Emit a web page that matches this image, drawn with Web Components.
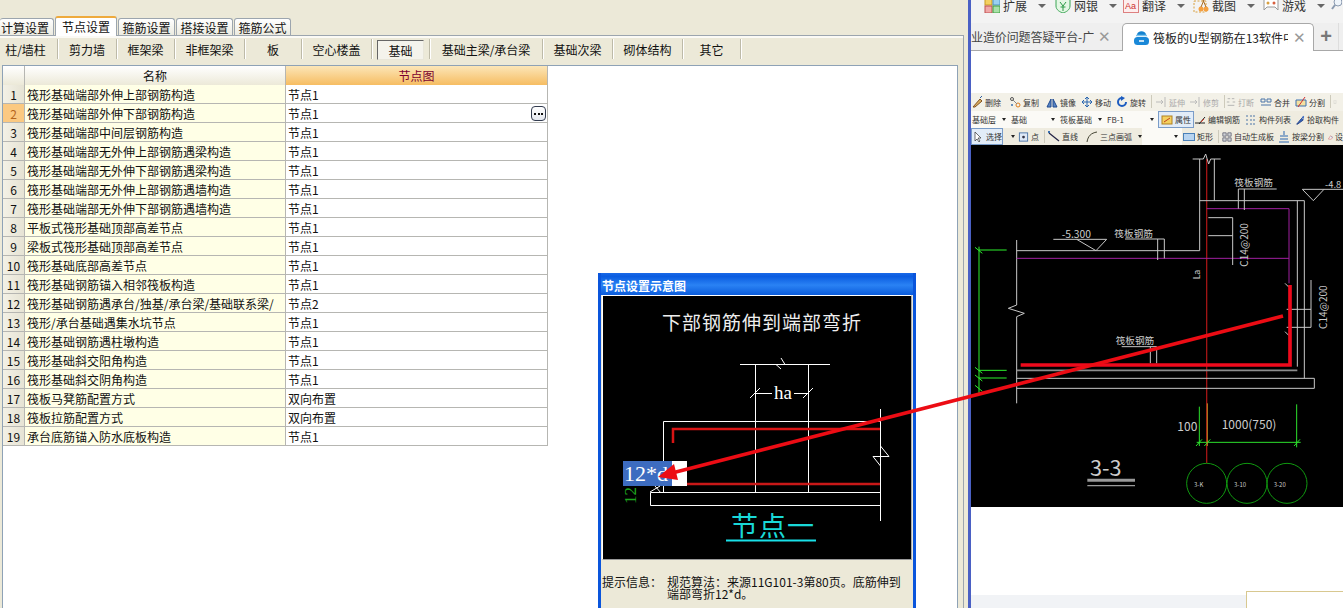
<!DOCTYPE html>
<html lang="zh">
<head>
<meta charset="utf-8">
<title>节点设置</title>
<style>
    html, body { margin: 0; height: 100%; overflow: hidden; }
    body {
        position: relative;
        display: flex;
        width: 1343px;
        height: 608px;
        font: 12px "Noto Sans CJK SC", "Liberation Sans", sans-serif;
        color: #111;
        background: #ece9d8;
    }
</style>
</head>
<body>
<setting-app></setting-app>
<browser-pane></browser-pane>
<node-dialog>
    <span slot="title">节点设置示意图</span>
    <svg slot="drawing" viewBox="0 0 306 261" width="306" height="261" fill="none" stroke="#fff" stroke-width="1">
        <text x="59" y="34" fill="#eee" stroke="none" font-size="19" letter-spacing="1">下部钢筋伸到端部弯折</text>
        <path d="M137 68.500H227M152.500 68.500V196M205.500 68.500V196"/>
        <path d="M178 62L182 68.500H173L178 73"/>
        <path d="M152.500 97.500H169M191 97.500H205M147 102l10-10M200 102l10-10"/>
        <text x="171" y="103" fill="#fff" stroke="none" font-size="19" font-family="Liberation Serif, serif">ha</text>
        <path d="M60.500 196V125.500H277M47.500 196.500H277M47.500 196.500V209.500H277M277.500 113V225"/>
        <path d="M277.500 150L286 160.500H270L277.500 170"/>
        <path d="M70 147V133H277" stroke="#d81414" stroke-width="2.500"/>
        <path d="M84 188H277" stroke="#c81818" stroke-width="2.500"/>
        <rect x="69" y="165" width="15" height="25" fill="#fff" stroke="none"/>
        <rect x="20" y="165" width="49" height="25" fill="#3d6cc0" stroke="none"/>
        <text x="21" y="185" fill="#fff" stroke="none" font-size="22" font-family="Liberation Serif, serif">12*d</text>
        <text transform="translate(33,208) rotate(-90)" fill="#1fa51f" stroke="none" font-size="17" font-family="Liberation Serif, serif">12</text>
        <path d="M47 196l10-6M52 190l6 7"/>
        <text x="128" y="240" fill="#19d8d8" stroke="none" font-size="27" letter-spacing="1">节点一</text>
        <path d="M123 244.500H213" stroke="#19e0e8" stroke-width="2"/>
    </svg>
    <span slot="label">提示信息：</span>
    <span slot="info">规范算法：来源11G101-3第80页。底筋伸到<br>端部弯折12*d。</span>
</node-dialog>
<red-arrow></red-arrow>

<script>
class SettingApp extends HTMLElement {
    constructor() {
        super();
        const shadowRoot = this.attachShadow({ mode: 'open' });
        const tabs = [['计算设置', 54, 0], ['节点设置', 62, 1], ['箍筋设置', 57, 0], ['搭接设置', 57, 0], ['箍筋公式', 57, 0]];
        const tools = [['柱/墙柱', 58], ['剪力墙', 59], ['框架梁', 58], ['非框架梁', 70], ['板', 57], ['空心楼盖', 70], ['基础', 58, 1], ['基础主梁/承台梁', 113], ['基础次梁', 70], ['砌体结构', 70], ['其它', 58]];
        shadowRoot.innerHTML = `
        <style>
            :host { display: block; width: 968px; height: 608px; flex: none; background: #ece9d8; }
            .tabs { display: flex; align-items: flex-end; height: 36px; gap: 1px; position: relative; z-index: 1; }
            .tab {
                box-sizing: border-box;
                height: 17px;
                margin-bottom: 1px;
                text-align: center;
                line-height: 18px;
                border: 1px solid #9ca5ae;
                border-bottom: 0;
                border-radius: 3px 3px 0 0;
                background: linear-gradient(#fff, #ecebe0);
            }
            .tab:first-child { border-left: 0; padding-right: 3px; }
            .tab.on {
                height: 20px;
                margin-bottom: 0;
                line-height: 17px;
                background: #fff;
                border-color: #9ca5ae;
                border-top: 2px solid #eeaa3c;
            }
            .panel {
                box-sizing: border-box;
                width: 964px;
                height: 573px;
                margin-top: -1px;
                border-top: 1px solid #9ca5ae;
                border-right: 1px solid #9ca5ae;
                box-shadow: inset 0 2px 0 #fbfaf5;
            }
            .tools { display: flex; height: 26px; padding-top: 3px; }
            .tool {
                box-sizing: border-box;
                display: flex;
                align-items: center;
                justify-content: center;
                height: 20px;
                border-right: 1px solid #bdbaa8;
                box-shadow: 1px 0 0 #fff;
            }
            .tool:first-child { padding-right: 6px; }
            .tool.on span {
                box-sizing: border-box;
                width: 47px;
                height: 20px;
                margin-top: 1px;
                line-height: 20px;
                text-align: center;
                background: #f4f3ec;
                border: 1px solid #e8e6da;
                border-top-color: #666;
                border-left-color: #666;
            }
            .frame {
                box-sizing: border-box;
                width: 956px;
                height: 544px;
                margin-left: 2px;
                background: #fff;
                border: 1px solid #8ea2b6;
                border-bottom: 0;
            }
        </style>
        <div class="tabs">${tabs.map(t => `<div class="tab ${t[2] ? 'on' : ''}" style="width:${t[1]}px">${t[0]}</div>`).join('')}</div>
        <div class="panel">
            <div class="tools">${tools.map(t => `<div class="tool ${t[2] ? 'on' : ''}" style="width:${t[1]}px"><span>${t[0]}</span></div>`).join('')}</div>
            <div class="frame"><node-table></node-table></div>
        </div>
        `;
    }
}

class NodeTable extends HTMLElement {
    constructor() {
        super();
        const shadowRoot = this.attachShadow({ mode: 'open' });
        const rows = [
            ['筏形基础端部外伸上部钢筋构造', '节点1'],
            ['筏形基础端部外伸下部钢筋构造', '节点1'],
            ['筏形基础端部中间层钢筋构造', '节点1'],
            ['筏形基础端部无外伸上部钢筋遇梁构造', '节点1'],
            ['筏形基础端部无外伸下部钢筋遇梁构造', '节点1'],
            ['筏形基础端部无外伸上部钢筋遇墙构造', '节点1'],
            ['筏形基础端部无外伸下部钢筋遇墙构造', '节点1'],
            ['平板式筏形基础顶部高差节点', '节点1'],
            ['梁板式筏形基础顶部高差节点', '节点1'],
            ['筏形基础底部高差节点', '节点1'],
            ['筏形基础钢筋锚入相邻筏板构造', '节点1'],
            ['筏形基础钢筋遇承台/独基/承台梁/基础联系梁/', '节点2'],
            ['筏形/承台基础遇集水坑节点', '节点1'],
            ['筏形基础钢筋遇柱墩构造', '节点1'],
            ['筏形基础斜交阳角构造', '节点1'],
            ['筏形基础斜交阴角构造', '节点1'],
            ['筏板马凳筋配置方式', '双向布置'],
            ['筏板拉筋配置方式', '双向布置'],
            ['承台底筋锚入防水底板构造', '节点1'],
        ];
        shadowRoot.innerHTML = `
        <style>
            :host { display: grid; grid-template-columns: 22px 261px 262px; grid-auto-rows: 19px; width: 545px; }
            div {
                box-sizing: border-box;
                padding: 0 2px;
                line-height: 19px;
                white-space: nowrap;
                overflow: hidden;
                border-right: 1px solid #b6b6b2;
                border-bottom: 1px solid #b6b6b2;
            }
            .head { height: 20px; margin-bottom: -1px; text-align: center; background: linear-gradient(#fff, #ece9d8); }
            .head.sel { color: #7a0030; background: linear-gradient(#fce6b8, #f6bd62); }
            .num { text-align: center; padding: 0; background: linear-gradient(90deg, #f3f1e6, #e6e3d4); }
            .num.sel { color: #b5651d; background: #fbc981; }
            .name { background: #ffffe6; }
            .node { display: flex; justify-content: space-between; background: #fff; padding-right: 1px; }
            .more {
                box-sizing: border-box;
                display: flex;
                align-items: center;
                justify-content: center;
                gap: 1.500px;
                width: 15px;
                height: 15px;
                margin-top: 2px;
                background: linear-gradient(#fff, #e4e8f0);
                border: 1px solid #333c50;
                border-radius: 4px;
            }
            .more i { width: 2px; height: 2px; background: #111; }
        </style>
        <div class="head"></div><div class="head">名称</div><div class="head sel">节点图</div>
        ${rows.map((r, i) => `
            <div class="num ${i == 1 ? 'sel' : ''}">${i + 1}</div>
            <div class="name">${r[0]}</div>
            <div class="node"><span>${r[1]}</span>${i == 1 ? '<span class="more"><i></i><i></i><i></i></span>' : ''}</div>
        `).join('')}
        `;
    }
}

class NodeDialog extends HTMLElement {
    constructor() {
        super();
        const shadowRoot = this.attachShadow({ mode: 'open' });
        shadowRoot.innerHTML = `
        <style>
            :host {
                position: absolute;
                left: 598px;
                top: 273px;
                box-sizing: border-box;
                display: block;
                width: 318px;
                height: 335px;
                overflow: hidden;
                background: #ece9d8;
                border: solid #0a55dc;
                border-width: 0 3px;
            }
            .title {
                height: 22px;
                margin: 0 -3px;
                padding-left: 4px;
                color: #fff;
                font-weight: 700;
                line-height: 25px;
                border-radius: 3px 3px 0 0;
                background: linear-gradient(#1a6ae8, #0a5ce0 15%, #2a82f4 55%, #0b5cdc);
            }
            .view {
                box-sizing: border-box;
                width: 310px;
                height: 265px;
                margin: 0 0 0 1px;
                background: #000;
                border: 1px solid;
                border-color: #fff #aaa #999 #fff;
            }
            .view ::slotted(svg) { display: block; }
            .info { display: flex; gap: 5px; margin-top: 16px; padding-left: 1px; line-height: 12px; }
            .info .l { flex: 0 0 60px; }
        </style>
        <div class="title"><slot name="title"></slot></div>
        <div class="view"><slot name="drawing"></slot></div>
        <div class="info"><div class="l"><slot name="label"></slot></div><div><slot name="info"></slot></div></div>
        `;
    }
}

class RedArrow extends HTMLElement {
    constructor() {
        super();
        const shadowRoot = this.attachShadow({ mode: 'open' });
        shadowRoot.innerHTML = `
        <style>
            :host { position: absolute; left: 0; top: 0; width: 1343px; height: 608px; pointer-events: none; }
            svg { display: block; }
        </style>
        <svg width="1343" height="608" viewBox="0 0 1343 608">
            <path d="M1283 316L672 473" stroke="#ec0c14" stroke-width="3.500"/>
            <path d="M658 477L674 464L678 480Z" fill="#ec0c14"/>
        </svg>
        `;
    }
}

class BrowserPane extends HTMLElement {
    constructor() {
        super();
        const shadowRoot = this.attachShadow({ mode: 'open' });
        const addons = [
            ['扩展', 984, `<rect x="1" y="0" width="7" height="7" fill="#f4d060" stroke="#c79a20"/><rect x="9" y="0" width="7" height="7" fill="#9ad0f0" stroke="#4a90c0"/><rect x="1" y="8" width="7" height="7" fill="#f0a8a8" stroke="#c05050"/><rect x="9" y="8" width="7" height="7" fill="#a8e0a8" stroke="#40a040"/>`, 1055],
            ['网银', 1055, `<path d="M1 1H15V8C15 12 11 14 8 15C5 14 1 12 1 8Z" fill="#e4f7e4" stroke="#3aa655"/><path d="M5 4L8 8L11 4M8 8V13M5.500 9H10.500" stroke="#2a9a45" fill="none"/>`, 1123],
            ['翻译', 1123, `<rect x="0.500" y="0.500" width="15" height="14" fill="#fdeeee" stroke="#dd8080"/><text x="2" y="11" font-size="9" fill="#cc3030" font-family="Liberation Sans, sans-serif">Aa</text>`, 1193],
            ['截图', 1193, `<path d="M1 3H13V14H1Z" fill="none" stroke="#d8a040" stroke-dasharray="2 1.500"/><circle cx="8" cy="11" r="2.500" fill="#f4a040"/><circle cx="13" cy="11" r="2.500" fill="#f4a040"/><path d="M8 9L11 2M13 9L10 2" stroke="#a86a20"/>`, 1263],
            ['游戏', 1263, `<path d="M1 1H15V12L12 9H4L1 12Z" fill="#fff" stroke="#999"/><circle cx="5" cy="5" r="1.500" fill="#d8a040"/><circle cx="11" cy="5" r="1.500" fill="#d86040"/>`, 1331],
        ];
        shadowRoot.innerHTML = `
        <style>
            :host { display: flex; flex-direction: column; width: 375px; height: 608px; flex: none; box-sizing: border-box; border-left: 3px solid #4a60c4; background: #fff; overflow: hidden; }
            .addons { display: flex; height: 23px; flex: none; overflow: hidden; background: #f3f3f3; padding-left: 13px; }
            .addon { display: flex; gap: 3px; align-items: flex-start; margin-top: -3px; font-size: 12px; line-height: 17px; color: #333; }
            .addon svg { flex: none; margin-top: 1px; }
            .addon b { margin: 7px 0 0 8px; border: 4px solid transparent; border-top: 4px solid #666; border-bottom: 0; }
            .strip { display: flex; height: 28px; flex: none; box-sizing: border-box; background: #efefef; border-bottom: 1px solid #a8a8a8; }
            .tab { display: flex; align-items: center; overflow: hidden; white-space: nowrap; }
            .tab .t { overflow: hidden; flex: none; }
            .x { color: #999; font: 15px "Liberation Sans", sans-serif; flex: none; }
            .idle { width: 151px; color: #444; font-size: 12px; flex: none; }
            .idle .t { width: 123px; letter-spacing: -.1px; }
            .idle .x { margin-left: 4px; }
            .active { box-sizing: border-box; width: 192px; height: 28px; flex: none; padding-left: 10px; gap: 3px; background: #fff; border: 1px solid #a8a8a8; border-bottom: 0; border-radius: 5px 5px 0 0; color: #222; font-size: 12px; }
            .active .t { width: 135px; }
            .active .x { margin-left: 2px; }
            .plus { flex: none; width: 24px; text-align: center; color: #777; font: 700 20px/26px "Liberation Sans", sans-serif; border-right: 1px solid #ddd; }
            .gap { height: 42px; flex: none; }
            .fill { flex: 1; }
            .foot { display: flex; height: 17px; flex: none; }
            .foot .gray { width: 275px; height: 13px; margin-top: 4px; background: #f1f3f6; }
            .foot .box { flex: 1; box-sizing: border-box; border: solid #d8c890; border-width: 1px 0 0 1px; }
        </style>
        <div class="addons">
            ${addons.map(a => {
                const w = a[3] - a[1];
                return `<div class="addon" style="flex:0 0 ${w}px"><svg width="16" height="15" viewBox="0 0 16 15">${a[2]}</svg><span>${a[0]}</span><b></b></div>`;
            }).join('')}
            <svg width="11" height="13" viewBox="0 0 11 13" style="flex:none;margin-top:-3px"><circle cx="7" cy="5" r="4" fill="#eef4fa" stroke="#8a9ab0"/><path d="M4 8L1 12" stroke="#8a9ab0" stroke-width="2"/></svg>
        </div>
        <div class="strip">
            <div class="tab idle"><span class="t">业造价问题答疑平台-广</span><span class="x">✕</span></div>
            <div class="tab active">
                <svg width="17" height="17" viewBox="0 0 17 17" style="flex:none"><path d="M4 6C4 1 13 1 13 6Z" fill="#1583d0"/><path d="M3 6.500H14" stroke="#7cc4ee" stroke-width="1.500"/><rect x="1" y="8" width="15" height="8" rx="3.500" fill="#1a88d8"/><path d="M6 12H11" stroke="#fff" stroke-width="1.500"/></svg>
                <span class="t">筏板的U型钢筋在13软件中</span><span class="x">✕</span>
            </div>
            <div class="plus">+</div>
        </div>
        <div class="gap"></div>
        <cad-toolbar></cad-toolbar>
        <cad-drawing></cad-drawing>
        <div class="fill"></div>
        <div class="foot"><div class="gray"></div><div class="box"></div></div>
        `;
    }
}

const cadIcons = {
    del: '<path d="M2 11L9 3L11 5L4 11Z" fill="#dcb060" stroke="#805020"/><path d="M9 2L11 0" stroke="#3060a0"/>',
    copy: '<circle cx="3" cy="3" r="1.500" fill="none" stroke="#555"/><circle cx="9" cy="9" r="2" fill="none" stroke="#e08020"/><circle cx="3" cy="9" r="1" fill="#3a70b0"/><path d="M4 4L8 8" stroke="#888"/>',
    mirror: '<path d="M1 11L5 3V11ZM11 11L7 3V11Z" fill="#5a86c4" stroke="#204a90"/>',
    move: '<path d="M6 1V11M1 6H11M6 1L4 3M6 1L8 3M6 11L4 9M6 11L8 9M1 6L3 4M1 6L3 8M11 6L9 4M11 6L9 8" stroke="#2a66b0" fill="none"/>',
    rotate: '<path d="M10 6A4 4 0 1 1 6 2" fill="none" stroke="#1c5cc0" stroke-width="2"/><path d="M5 0L9 2L5 5Z" fill="#1c5cc0"/>',
    extend: '<path d="M1 6H8M10 1V11" stroke="#bbb"/><path d="M6 4L8 6L6 8" stroke="#bbb" fill="none"/>',
    brk: '<path d="M1 6H4M8 6H11M2 2H5M7 2H10M2 10H10" stroke="#aaa"/>',
    merge: '<path d="M1 3H5V6H1ZM7 3H11V6H7ZM1 9H11" stroke="#4a74a8" fill="none"/>',
    split: '<path d="M1 10V4H11V10Z" stroke="#3a70b0" fill="#f4e0a0"/><path d="M3 11L10 1" stroke="#d03030"/>',
    attr: '<rect x="1" y="2" width="10" height="8" fill="#f4d060" stroke="#b08020"/><path d="M3 8L9 4" stroke="#c04020"/>',
    edit: '<path d="M1 9H11M5 10L11 3" stroke="#222" fill="none"/><path d="M7 8L10 5" stroke="#d03020"/>',
    list: '<path d="M1 2H3M1 6H3M1 10H3M5 2H11M5 6H11M5 10H11" stroke="#4a74a8" stroke-dasharray="2 1"/>',
    pick: '<path d="M2 11L8 4L10 6L3 11Z" fill="#3a68c0" stroke="#1a3a80"/><path d="M8 3L10 1L11 2L10 5" fill="#3a68c0"/>',
    select: '<path d="M3 1V10L5 8L7 11L8 10L6 7L9 7Z" fill="#fff" stroke="#333" stroke-width=".7"/>',
    point: '<rect x="1.500" y="1.500" width="9" height="9" fill="#dde8f6" stroke="#4a74a8"/><circle cx="6" cy="6" r="1.500" fill="#334"/>',
    line: '<path d="M1 2L11 10" stroke="#224" stroke-width="1.300"/><rect x="0" y="0" width="2" height="2" fill="#3a70b0"/>',
    arc: '<path d="M1 11C2 5 5 2 11 1" fill="none" stroke="#443"/>',
    rect: '<rect x="0.500" y="2.500" width="11" height="7" fill="#b8d4f0" stroke="#4a80b8"/>',
    auto: '<path d="M1 1H5V5H1ZM7 1H11V5H7ZM1 7H5V11H1ZM7 7H11V11H7Z" fill="#d0d4d8" stroke="#667"/>',
    beam: '<path d="M6 0V4M2 5H10M2 8H10M1 11H11" stroke="#2a66b0"/>',
    wall: '<path d="M1 11L6 3L11 7L8 11Z" fill="#fff" stroke="#c04040"/><path d="M6 6H11" stroke="#3a70b0"/>',
};

class CadToolbar extends HTMLElement {
    constructor() {
        super();
        const shadowRoot = this.attachShadow({ mode: 'open' });
        // each item: start x on the page, icon, label, kind
        const rows = [
            [[971, 'del', '删除'], [1005, 'copy', '复制'], [1043, 'mirror', '镜像'], [1080, 'move', '移动'], [1115, 'rotate', '旋转'], [1150, 'sep'], [1153, 'extend', '延伸', 'off'], [1189, 'extend', '修剪', 'off'], [1223, 'sep'], [1226, 'brk', '打断', 'off'], [1258, 'merge', '合并'], [1294, 'split', '分割'], [1329, 'sep'], [1333, 'brk', '']],
            [[971, '', '基础层', 'dd'], [1010, '', '基础', 'dd'], [1059, '', '筏板基础', 'dd'], [1106, '', 'FB-1', 'dd'], [1158, 'attr', '属性', 'on'], [1194, 'edit', '编辑钢筋'], [1244, 'list', '构件列表'], [1295, 'pick', '拾取构件']],
            [[971, 'select', '选择', 'on'], [1003, '', '', 'caret'], [1018, 'point', '点'], [1043, 'sep'], [1047, 'line', '直线'], [1082, 'arc', '三点画弧'], [1136, '', '', 'caret'], [1138, '', '', 'dd'], [1178, 'rect', '矩形'], [1213, 'sep'], [1218, 'auto', '自动生成板'], [1274, 'beam', '按梁分割'], [1324, 'wall', '设']],
        ];
        const renderRow = r => r.map((it, i) => {
            const next = i + 1 < r.length ? r[i + 1][0] : 1343;
            const w = next - it[0];
            if (it[1] == 'sep') return `<span class="sep" style="width:${w}px"></span>`;
            const ico = it[1] ? `<svg width="12" height="12" viewBox="0 0 12 12">${cadIcons[it[1]]}</svg>` : '';
            return `<span class="it ${it[3] || ''}" style="width:${w}px">${ico}<em>${it[2]}</em>${it[3] == 'dd' || it[3] == 'caret' ? '<b></b>' : ''}</span>`;
        }).join('');
        shadowRoot.innerHTML = `
        <style>
            :host { display: block; flex: none; height: 52px; background: #efece0; color: #333; font-size: 8px; overflow: hidden; }
            .row { display: flex; height: 17px; align-items: stretch; }
            .row:nth-child(2) { height: 18px; background: #f3f1e8; }
            .it { box-sizing: border-box; display: flex; align-items: center; justify-content: flex-end; gap: 2px; flex: none; overflow: hidden; white-space: nowrap; padding-right: 4px; }
            .it em { font-style: normal; }
            .it b { flex: none; margin-left: auto; border: 2.500px solid transparent; border-top: 3px solid #222; border-bottom: 0; }
            .it.dd { justify-content: flex-start; gap: 0; padding-left: 1px; background: #fbfaf6; }
            .it.caret { padding: 0 3px; justify-content: center; }
            .it.off { color: #aaa; }
            .it.on { justify-content: center; padding: 0; background: #e2ecf8; border: 1px solid #7a9cc8; }
            .sep { flex: none; position: relative; }
            .sep::before { content: ''; display: block; width: 1px; height: 13px; margin: 2px 0 0 1px; background: #cdcabb; }
        </style>
        ${rows.map(r => `<div class="row">${renderRow(r)}</div>`).join('')}
        `;
    }
}

class CadDrawing extends HTMLElement {
    constructor() {
        super();
        const shadowRoot = this.attachShadow({ mode: 'open' });
        shadowRoot.innerHTML = `
        <style>
            :host { display: block; flex: none; width: 372px; height: 362px; background: #000; }
            svg { display: block; font-family: "Noto Sans CJK SC", "Liberation Sans", sans-serif; }
            text { fill: #ccc; stroke: none; }
        </style>
        <svg width="372" height="362" viewBox="3 -15 1116 1086" fill="none" stroke="#c8c8c8" stroke-width="3">
            <path d="M710 27V940" stroke="#a01414" stroke-width="4"/>
            <path d="M668 27H700L707 12L716 42L722 27H752M689 27V302H140M733 27V152M689 152H1003M982 152V650M1003 152V685"/>
            <path d="M140 270V465L115 475L163 490L140 500V760"/>
            <path d="M710 176H957V400M140 325H957" stroke="#a020a0"/>
            <path d="M805 117H920M805 117V176M823 117V180"/>
            <text x="793" y="108" font-size="29">筏板钢筋</text>
            <path d="M465 267H583M563 267V330M583 267V325"/>
            <text x="433" y="260" font-size="29">筏板钢筋</text>
            <path d="M455 590H560M541 590V640M560 590V640"/>
            <text x="437" y="582" font-size="29">筏板钢筋</text>
            <text x="275" y="265" font-size="31">-5.300</text>
            <path d="M250 268H410L378 302L320 268"/>
            <text x="1065" y="113" font-size="28">-4.8</text>
            <path d="M997 118H1062L1030 152ZM1062 118H1119"/>
            <path d="M715 203H788V345M715 257H788"/>
            <text transform="translate(833,350) rotate(-90)" font-size="30">C14@200</text>
            <text transform="translate(690,388) rotate(-90)" font-size="26">La</text>
            <path d="M1023 390V532M950 478H1023M950 532H1023M945 400L957 412M945 545L957 557"/>
            <text transform="translate(1070,537) rotate(-90)" font-size="30">C14@200</text>
            <path d="M152 645H960V405" stroke="#ee0a1c" stroke-width="11"/>
            <path d="M140 661H982" stroke="#8c8c8c" stroke-width="5"/>
            <path d="M140 685H1033V715H140"/>
            <path d="M27 290V730M27 300H110M27 661H110M27 684H110M15 292L37 310M15 652L37 670M15 675L37 693M15 706L37 724" stroke="#2cf02c"/>
            <path d="M688 770V888M980 763V892M680 877H992M678 888L696 868M703 888L721 868M972 888L990 868" stroke="#2ce02c"/>
            <path d="M712 760V888" stroke="#c08a20"/>
            <text x="622" y="843" font-size="36">100</text>
            <text x="755" y="836" font-size="36">1000(750)</text>
            <text x="360" y="978" font-size="65" fill="#eee">3-3</text>
            <path d="M352 991H495" stroke="#999" stroke-width="9"/>
            <path d="M352 1007H495" stroke="#999" stroke-width="4"/>
            <g stroke="#109a10"><circle cx="710" cy="1000" r="60"/><circle cx="831" cy="1000" r="60"/><circle cx="951" cy="1000" r="60"/></g>
            <text x="672" y="1010" font-size="18">3-K</text>
            <text x="792" y="1010" font-size="18">3-10</text>
            <text x="911" y="1010" font-size="18">3-20</text>
        </svg>
        `;
    }
}

customElements.define('setting-app', SettingApp);
customElements.define('node-table', NodeTable);
customElements.define('node-dialog', NodeDialog);
customElements.define('red-arrow', RedArrow);
customElements.define('browser-pane', BrowserPane);
customElements.define('cad-toolbar', CadToolbar);
customElements.define('cad-drawing', CadDrawing);
</script>
</body>
</html>
